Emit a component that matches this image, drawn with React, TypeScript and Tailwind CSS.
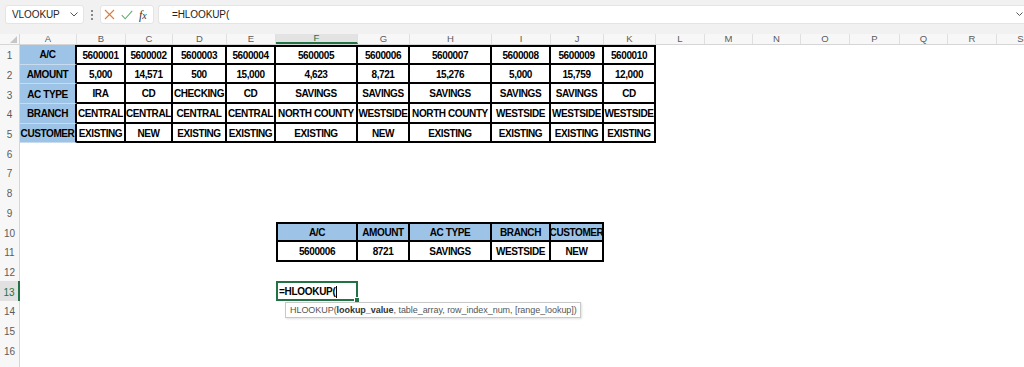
import React from "react";

const COLS: { l: string; w: string }[] = [
  { l: "A", w: "w-[57px]" },
  { l: "B", w: "w-[49px]" },
  { l: "C", w: "w-[47px]" },
  { l: "D", w: "w-[54px]" },
  { l: "E", w: "w-[49px]" },
  { l: "F", w: "w-[82px]" },
  { l: "G", w: "w-[52px]" },
  { l: "H", w: "w-[82px]" },
  { l: "I", w: "w-[59px]" },
  { l: "J", w: "w-[53px]" },
  { l: "K", w: "w-[52px]" },
  { l: "L", w: "w-[49px]" },
  { l: "M", w: "w-[48px]" },
  { l: "N", w: "w-[48px]" },
  { l: "O", w: "w-[49px]" },
  { l: "P", w: "w-[50px]" },
  { l: "Q", w: "w-[48px]" },
  { l: "R", w: "w-[49px]" },
  { l: "S", w: "w-[48px]" },
];

const T1: string[][] = [
  ["A/C", "5600001", "5600002", "5600003", "5600004", "5600005", "5600006", "5600007", "5600008", "5600009", "5600010"],
  ["AMOUNT", "5,000", "14,571", "500", "15,000", "4,623", "8,721", "15,276", "5,000", "15,759", "12,000"],
  ["AC TYPE", "IRA", "CD", "CHECKING", "CD", "SAVINGS", "SAVINGS", "SAVINGS", "SAVINGS", "SAVINGS", "CD"],
  ["BRANCH", "CENTRAL", "CENTRAL", "CENTRAL", "CENTRAL", "NORTH COUNTY", "WESTSIDE", "NORTH COUNTY", "WESTSIDE", "WESTSIDE", "WESTSIDE"],
  ["CUSTOMER", "EXISTING", "NEW", "EXISTING", "EXISTING", "EXISTING", "NEW", "EXISTING", "EXISTING", "EXISTING", "EXISTING"],
];

const T2: string[][] = [
  ["A/C", "AMOUNT", "AC TYPE", "BRANCH", "CUSTOMER"],
  ["5600006", "8721", "SAVINGS", "WESTSIDE", "NEW"],
];

const FONT = { fontFamily: '"Liberation Sans", Arial, sans-serif' };

function cx(...a: (string | false | undefined)[]) {
  return a.filter(Boolean).join(" ");
}

function Cell({ r, c }: { r: number; c: number }) {
  const w = COLS[c].w;
  const base = "shrink-0 h-full flex items-center justify-center pt-[1px] whitespace-nowrap overflow-visible text-[10px] font-bold tracking-[-0.4px] text-black";
  if (r >= 1 && r <= 5 && c <= 10) {
    const text = T1[r - 1][c];
    if (c === 0) {
      return (
        <div className={cx(base, w, "bg-[#9dc3e6] border-r-2 border-r-black border-b border-b-[#c9dcef]")}>{text}</div>
      );
    }
    return (
      <div className={cx(base, w, "border-r-2 border-b-2 border-black", r === 1 && "border-t-2")}>{text}</div>
    );
  }
  if (r >= 10 && r <= 11 && c >= 5 && c <= 9) {
    const text = T2[r - 10][c - 5];
    return (
      <div
        className={cx(
          base,
          w,
          "border-r-2 border-b-2 border-black",
          r === 10 && "border-t-2 bg-[#9dc3e6]",
          c === 5 && "border-l-2"
        )}
      >
        {text}
      </div>
    );
  }
  if (r === 13 && c === 5) {
    return (
      <div className={cx("shrink-0 h-full relative border-2 border-[#217346] flex items-center pl-[1px] pt-[1px]", w)}>
        <span className="text-[10px] font-semibold tracking-[-0.3px] text-black whitespace-nowrap">=HLOOKUP(</span>
        <span className="ml-[1px] w-[1px] h-[12px] bg-black" />
        <span className="absolute -right-[4px] -bottom-[4px] w-[6px] h-[6px] bg-[#217346] border border-white" />
        <div className="absolute left-[7px] top-[19px] z-10 h-[16px] bg-white border border-[#c8c8c8] shadow-[1px_1px_2px_rgba(0,0,0,0.12)] flex items-center pl-[4px] pr-[3px] text-[9px] tracking-[-0.05px] text-[#555] whitespace-nowrap">
          HLOOKUP(<span className="font-bold text-[#333]">lookup_value</span>, table_array, row_index_num, [range_lookup])
        </div>
      </div>
    );
  }
  return <div className={cx("shrink-0 h-full", w)} />;
}

function Toolbar() {
  return (
    <div className="h-[34px] bg-[#f1f1f1] flex items-start pt-[5px] pl-[5px] text-[#262626]" style={FONT}>
      <div className="w-[79px] h-[19px] bg-white rounded-[3px] border border-[#e4e4e4] flex items-center pl-[6px] pr-[5px] justify-between">
        <span className="text-[10px] tracking-[-0.1px]">VLOOKUP</span>
        <svg width="8" height="5" viewBox="0 0 8 5">
          <path d="M0.5 0.5 L4 4 L7.5 0.5" fill="none" stroke="#555" strokeWidth="1" />
        </svg>
      </div>
      <div className="w-[16px] h-[19px] flex flex-col items-center justify-center gap-[2px]">
        <span className="w-[2px] h-[2px] rounded-full bg-[#666]" />
        <span className="w-[2px] h-[2px] rounded-full bg-[#666]" />
        <span className="w-[2px] h-[2px] rounded-full bg-[#666]" />
      </div>
      <div className="w-[54px] h-[19px] bg-white rounded-[3px] border border-[#e4e4e4] flex items-center pl-[3px] gap-[6px]">
        <svg width="11" height="11" viewBox="0 0 11 11">
          <path d="M1 1 L10 10 M10 1 L1 10" stroke="#e07a3c" strokeWidth="1.1" fill="none" />
        </svg>
        <svg width="12" height="10" viewBox="0 0 12 10">
          <path d="M0.8 5.2 L4.2 8.8 L11.2 0.8" stroke="#5fae6e" strokeWidth="1.1" fill="none" />
        </svg>
        <span className="text-[12px] italic leading-none text-[#333]" style={{ fontFamily: '"Liberation Serif", "Times New Roman", serif' }}>
          f<span className="text-[10px]">x</span>
        </span>
      </div>
      <div className="ml-[4px] flex-1 h-[19px] bg-white rounded-l-[3px] border border-r-0 border-[#e4e4e4] flex items-center pl-[13px] justify-between pr-[1px]">
        <span className="text-[10px] tracking-[-0.1px] text-[#222]">=HLOOKUP(</span>
        <svg width="7" height="5" viewBox="0 0 7 5">
          <path d="M0.5 0.5 L3.5 3.5 L6.5 0.5" fill="none" stroke="#555" strokeWidth="1" />
        </svg>
      </div>
    </div>
  );
}

function HeaderRow() {
  return (
    <div className="h-[11px] flex bg-[#f7f7f7] border-b border-[#d6d6d6]" style={FONT}>
      <div className="shrink-0 w-[20px] h-full relative border-r border-[#d6d6d6]">
        <svg className="absolute right-[2px] bottom-[1px]" width="7" height="7" viewBox="0 0 7 7">
          <path d="M7 0 L7 7 L0 7 Z" fill="#c6c6c6" />
        </svg>
      </div>
      {COLS.map((col, i) => (
        <div
          key={col.l}
          className={cx(
            "shrink-0 h-full flex items-center justify-center text-[9.5px] leading-none border-r border-[#e0e0e0]",
            col.w,
            i === 5 ? "bg-[#e3e3e3] text-[#217346] border-b-2 border-b-[#217346]" : "text-[#5b5b5b]"
          )}
        >
          {col.l}
        </div>
      ))}
    </div>
  );
}

export default function App() {
  const rows = Array.from({ length: 17 }, (_, i) => i + 1);
  return (
    <div className="w-[1024px] h-[367px] overflow-hidden bg-white" style={FONT}>
      <Toolbar />
      <HeaderRow />
      <div>
        {rows.map((r) => (
          <div key={r} className="h-[19.7px] flex">
            <div
              className={cx(
                "shrink-0 w-[20px] h-full flex items-center justify-center pt-[3px] text-[10px] leading-none",
                r === 13
                  ? "bg-[#e1e1e1] text-[#217346] border-r-2 border-r-[#217346]"
                  : "bg-[#f7f7f7] text-[#5b5b5b] border-r border-r-[#d6d6d6]"
              )}
            >
              {r < 17 ? r : ""}
            </div>
            {COLS.map((_, c) => (
              <Cell key={c} r={r} c={c} />
            ))}
          </div>
        ))}
      </div>
    </div>
  );
}
